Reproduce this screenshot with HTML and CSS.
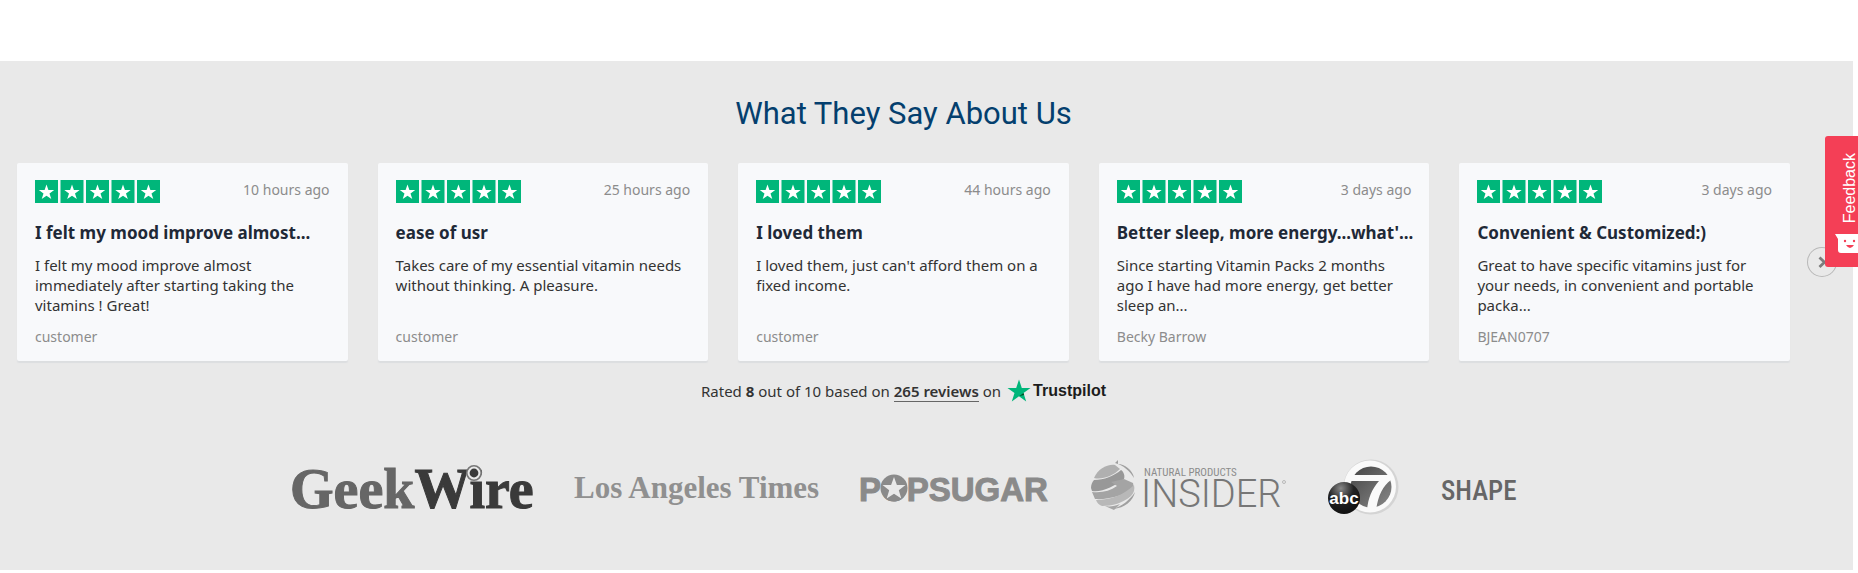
FILE: index.html
```
<!DOCTYPE html>
<html lang="en">

<head>
  <meta charset="utf-8">
  <title>Reviews</title>
  <link rel="stylesheet" href="styles.css">
</head>

<body>
  <svg class="defs" aria-hidden="true">
    <defs>
      <path id="star" d="M0 -8 L1.9 -2.5 H7.7 L3 1 L4.8 6.6 L0 3.2 L-4.8 6.6 L-3 1 L-7.7 -2.5 H-1.9 Z" />
      <g id="rating">
        <path fill="#00b67a" d="M0 0h23v23H0zM25.5 0h23v23h-23zM51 0h23v23H51zM76.5 0h23v23h-23zM102 0h23v23h-23z" />
        <g fill="#fff">
          <use href="#star" x="11.5" y="12.5" />
          <use href="#star" x="37" y="12.5" />
          <use href="#star" x="62.5" y="12.5" />
          <use href="#star" x="88" y="12.5" />
          <use href="#star" x="113.5" y="12.5" />
        </g>
      </g>
    </defs>
  </svg>

  <section class="reviews">
    <h2>What They Say About Us</h2>

    <div class="cards">
      <article class="card">
        <header>
          <svg class="rating" role="img" aria-label="5 stars"><use href="#rating" /></svg>
          <time>10 hours ago</time>
        </header>
        <h3>I felt my mood improve almost...</h3>
        <p>I felt my mood improve almost immediately after starting taking the vitamins ! Great!</p>
        <footer>customer</footer>
      </article>

      <article class="card">
        <header>
          <svg class="rating" role="img" aria-label="5 stars"><use href="#rating" /></svg>
          <time>25 hours ago</time>
        </header>
        <h3>ease of usr</h3>
        <p>Takes care of my essential vitamin needs without thinking. A pleasure.</p>
        <footer>customer</footer>
      </article>

      <article class="card">
        <header>
          <svg class="rating" role="img" aria-label="5 stars"><use href="#rating" /></svg>
          <time>44 hours ago</time>
        </header>
        <h3>I loved them</h3>
        <p>I loved them, just can't afford them on a fixed income.</p>
        <footer>customer</footer>
      </article>

      <article class="card">
        <header>
          <svg class="rating" role="img" aria-label="5 stars"><use href="#rating" /></svg>
          <time>3 days ago</time>
        </header>
        <h3>Better sleep, more energy...what'...</h3>
        <p>Since starting Vitamin Packs 2 months ago I have had more energy, get better sleep an...</p>
        <footer>Becky Barrow</footer>
      </article>

      <article class="card">
        <header>
          <svg class="rating" role="img" aria-label="5 stars"><use href="#rating" /></svg>
          <time>3 days ago</time>
        </header>
        <h3>Convenient &amp; Customized:)</h3>
        <p>Great to have specific vitamins just for your needs, in convenient and portable packa...</p>
        <footer>BJEAN0707</footer>
      </article>
    </div>

    <button class="next" type="button" aria-label="Next reviews">
      <svg width="30" height="30" viewBox="0 0 30 30">
        <path d="M12.5 10.5l5 4.8-5 4.8" fill="none" stroke="#7d7d7d" stroke-width="2.8" />
      </svg>
    </button>

    <div class="summary">
      <span>Rated <b>8</b> out of 10 based on <a href="#">265 reviews</a> on</span>
      <a class="trustpilot" href="#">
        <svg width="24" height="24" viewBox="0 0 24 24">
          <path fill="#00b67a" d="M12 0.5l2.8 8.4h8.7l-7 5.2 2.7 8.4-7.2-5.2-7.2 5.2 2.7-8.4-7-5.2h8.7z" />
          <path fill="#005128" d="M17.1 15.9l-.6-1.8-4.5 3.2z" />
        </svg>
        Trustpilot
      </a>
    </div>

    <div class="press">
      <svg width="241" height="60" role="img" aria-label="GeekWire">
        <text class="geekwire" x="-2" y="48"><tspan fill="#666">Geek</tspan><tspan class="wire">Wire</tspan></text>
        <circle cx="182" cy="13" r="7.2" fill="#e9e9e9" stroke="#777" stroke-width="1.6" />
        <circle cx="182" cy="13" r="4.4" fill="#3a3a3a" />
      </svg>

      <svg width="246" height="60" role="img" aria-label="Los Angeles Times">
        <text class="latimes" x="0" y="38">Los Angeles Times</text>
      </svg>

      <svg width="189" height="60" role="img" aria-label="Popsugar">
        <text class="popsugar" x="-2" y="41">POPSUGAR</text>
        <circle cx="33" cy="28" r="13.5" fill="#8a8a8a" />
        <path fill="#e9e9e9" d="M33 17l2.9 8h8.6l-6.7 5.3 2.5 8.2-7.3-4.7-7.3 4.7 2.5-8.2-6.7-5.3h8.6z" />
      </svg>

      <svg width="196" height="60" role="img" aria-label="Natural Products Insider">
        <path fill="#b0b0b0" d="M3 18C7 9 16 4 24 5l5 4C22 16 11 20 3 18z" />
        <path fill="#989898" d="M0 28c0-3 1-6 3-8 10 0 20-4 27-10 3 2 4 6 3 9C24 26 10 33 1 31z" />
        <path fill="#a4a4a4" d="M1 32c10 1 18-1 25-6l-6-4 13-3 9 4c1 3 0 6-2 8-9 4-22 9-36 8z" />
        <path fill="#b8b8b8" d="M5 40c14 0 28-5 38-15 1 4 0 8-3 11-8 7-19 10-29 10-3-1-5-3-6-6z" />
        <path fill="#a0a0a0" d="M24 3l3-3v4c6 0 15 6 16 14-4-7-11-13-19-15zM22 49c9-3 17-9 22-17-2 9-10 16-22 17z" />
        <path fill="#a6a6a6" d="M14 46c5 1 10 0 15-2l-6 6z" />
        <text class="natural" x="53" y="16">NATURAL PRODUCTS</text>
        <text class="insider" x="50" y="47">INSIDER</text>
        <circle cx="193" cy="22" r="1.5" fill="none" stroke="#999" stroke-width=".6" />
      </svg>

      <svg width="72" height="60" role="img" aria-label="abc 7">
        <defs>
          <radialGradient id="ball" cx=".4" cy=".2" r=".8">
            <stop offset="0" stop-color="#888" />
            <stop offset=".5" stop-color="#222" />
            <stop offset="1" stop-color="#111" />
          </radialGradient>
          <linearGradient id="disc" x2="1" y2="1">
            <stop offset="0" stop-color="#444" />
            <stop offset="1" stop-color="#888" />
          </linearGradient>
        </defs>
        <circle cx="43" cy="27" r="27.5" fill="#d4d4d4" />
        <circle cx="42" cy="26.5" r="26" fill="#fafafa" />
        <circle cx="43" cy="27" r="20.5" fill="url(#disc)" />
        <path fill="#fafafa" d="M21 15h42v5c-8 6-13 15-15 31l-9-1c1-12 5-21 12-29H21z" />
        <circle cx="16" cy="38" r="16" fill="url(#ball)" />
        <text class="abc" x="16" y="44">abc</text>
      </svg>

      <svg width="75" height="60" role="img" aria-label="Shape">
        <text class="shape" x="0" y="40">SHAPE</text>
      </svg>
    </div>
  </section>

  <button class="feedback" type="button">
    <svg width="26" height="20" viewBox="0 0 26 20">
      <path fill="#fff" d="M0 0h26v19H6q-3 0-3-3V5z" />
      <path fill="#f43f56" d="M11 11h8q-4 6-8 0z" />
      <circle cx="10" cy="7" r="1.2" fill="#f43f56" />
      <circle cx="19" cy="7" r="1.2" fill="#f43f56" />
    </svg>
    <span>Feedback</span>
  </button>
</body>

</html>
```
FILE: styles.css
```
* {
  box-sizing: border-box;
}

body {
  background: #fff;
  color: #333;
  font: 15px/20px "Noto Sans", "Open Sans", sans-serif;
  margin: 0;
  overflow-x: hidden;
  padding: 61px 5px 5px 0;
}

h2,
h3,
p {
  margin: 0;
}

button {
  border: none;
  cursor: pointer;
  padding: 0;
}

.defs {
  height: 0;
  position: absolute;
  width: 0;
}

.reviews {
  background: #e9e9e9;
  column-gap: 17px;
  display: grid;
  grid-template-columns: 1fr 30px;
  padding: 33px 16px 50px 17px;
}

.reviews h2 {
  color: #043f6e;
  font: 400 31px/40px Roboto, sans-serif;
  grid-column: 1;
  margin-bottom: 29px;
  text-align: center;
}

.cards {
  display: grid;
  gap: 30px;
  grid-column: 1;
  grid-template-columns: repeat(5, minmax(0, 1fr));
}

.card {
  background: #f8f9fb;
  border-radius: 2px;
  box-shadow: 0 2px 1px #dcdee0;
  display: flex;
  flex-direction: column;
  padding: 17px 18px 14px;
}

.card header {
  display: flex;
  height: 23px;
  justify-content: space-between;
}

.rating {
  height: 23px;
  width: 125px;
}

.card time,
.card footer {
  color: #8c8c8c;
  font-size: 14px;
}

.card h3 {
  color: #1f2937;
  font-size: 17px;
  font-weight: 700;
  line-height: 24px;
  margin: 18px 0 10px;
  white-space: nowrap;
}

.card p {
  margin-bottom: 12px;
  min-height: 60px;
}

.card footer {
  margin-top: auto;
}

.next {
  align-self: center;
  background: none;
  border-radius: 50%;
  box-shadow: inset 0 0 0 1px #b8b8b8;
  height: 30px;
}

.next svg {
  display: block;
}

.summary {
  align-items: center;
  display: flex;
  gap: 6px;
  grid-column: 1;
  justify-content: center;
  margin: 16px 0 55px;
}

.summary a {
  border-bottom: 1px solid #666;
  color: #333;
  font-weight: 600;
  text-decoration: none;
}

.summary .trustpilot {
  align-items: center;
  border: none;
  color: #1c1c1c;
  display: flex;
  font: 700 16px/28px "Liberation Sans", sans-serif;
  gap: 2px;
}

.press {
  align-items: center;
  display: flex;
  gap: 41px;
  grid-column: 1;
  justify-content: center;
}

.press svg {
  overflow: visible;
}

.geekwire {
  font: 700 56px "Liberation Serif", serif;
  stroke: #666;
}

.wire {
  fill: #3a3a3a;
  stroke: #3a3a3a;
}

.latimes {
  fill: #909090;
  font: 700 31px "Liberation Serif", serif;
}

.popsugar {
  fill: #8a8a8a;
  font: 700 33px "Liberation Sans", sans-serif;
  stroke: #8a8a8a;
}

.natural {
  fill: #8c8c8c;
  font: 11px "Roboto Condensed", sans-serif;
}

.insider {
  fill: #777;
  font: 300 38px Roboto, sans-serif;
}

.abc {
  fill: #fff;
  font: 700 17px "Liberation Sans", sans-serif;
  text-anchor: middle;
}

.shape {
  fill: #666;
  font: 500 27px "Roboto Condensed", sans-serif;
}

.feedback {
  align-items: flex-end;
  background: #f43f56;
  border-radius: 3px 0 0 3px;
  color: #fff;
  display: flex;
  flex-direction: column-reverse;
  font: 16px/16px "Liberation Sans", sans-serif;
  gap: 11px;
  height: 131px;
  overflow: hidden;
  padding: 13px 0;
  position: fixed;
  right: 0;
  top: 136px;
  width: 33px;
}

.feedback svg {
  flex: none;
  margin-right: -3px;
}

.feedback span {
  transform: rotate(180deg);
  writing-mode: vertical-rl;
}
```
